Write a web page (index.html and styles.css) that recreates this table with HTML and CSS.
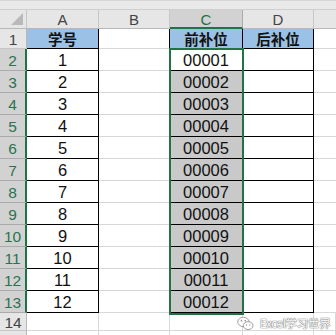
FILE: index.html
```html
<!DOCTYPE html>
<html>
<head>
<meta charset="utf-8">
<link rel="stylesheet" href="styles.css">
</head>
<body>
<div class="page">
  <div class="topbar"></div>
  <div class="sheet">
    <div class="corner"><span class="tri"></span></div>
    <div class="ch">A</div>
    <div class="ch">B</div>
    <div class="ch ch-sel">C</div>
    <div class="ch">D</div>
    <div class="ch ch-last"></div>

    <div class="rh">1</div>
    <div class="c a head">学号</div>
    <div class="c b"></div>
    <div class="c cc head">前补位</div>
    <div class="c d head">后补位</div>
    <div class="c e"></div>

    <div class="rh rh-sel">2</div><div class="c a">1</div><div class="c b"></div><div class="c cc active">00001</div><div class="c d"></div><div class="c e"></div>
    <div class="rh rh-sel">3</div><div class="c a">2</div><div class="c b"></div><div class="c cc sel">00002</div><div class="c d"></div><div class="c e"></div>
    <div class="rh rh-sel">4</div><div class="c a">3</div><div class="c b"></div><div class="c cc sel">00003</div><div class="c d"></div><div class="c e"></div>
    <div class="rh rh-sel">5</div><div class="c a">4</div><div class="c b"></div><div class="c cc sel">00004</div><div class="c d"></div><div class="c e"></div>
    <div class="rh rh-sel">6</div><div class="c a">5</div><div class="c b"></div><div class="c cc sel">00005</div><div class="c d"></div><div class="c e"></div>
    <div class="rh rh-sel">7</div><div class="c a">6</div><div class="c b"></div><div class="c cc sel">00006</div><div class="c d"></div><div class="c e"></div>
    <div class="rh rh-sel">8</div><div class="c a">7</div><div class="c b"></div><div class="c cc sel">00007</div><div class="c d"></div><div class="c e"></div>
    <div class="rh rh-sel">9</div><div class="c a">8</div><div class="c b"></div><div class="c cc sel">00008</div><div class="c d"></div><div class="c e"></div>
    <div class="rh rh-sel">10</div><div class="c a">9</div><div class="c b"></div><div class="c cc sel">00009</div><div class="c d"></div><div class="c e"></div>
    <div class="rh rh-sel">11</div><div class="c a">10</div><div class="c b"></div><div class="c cc sel">00010</div><div class="c d"></div><div class="c e"></div>
    <div class="rh rh-sel">12</div><div class="c a">11</div><div class="c b"></div><div class="c cc sel">00011</div><div class="c d"></div><div class="c e"></div>
    <div class="rh rh-sel">13</div><div class="c a">12</div><div class="c b"></div><div class="c cc sel">00012</div><div class="c d"></div><div class="c e"></div>

    <div class="rh">14</div><div class="c g"></div><div class="c g"></div><div class="c g"></div><div class="c g"></div><div class="c g"></div>
    <div class="rh"></div><div class="c g"></div><div class="c g"></div><div class="c g"></div><div class="c g"></div><div class="c g"></div>

    <div class="selbox"></div>
    <div class="mark">
      <svg class="wx" width="17" height="15" viewBox="0 0 16 14">
        <ellipse cx="6" cy="5.5" rx="5.3" ry="4.4" fill="#fff" stroke="#9a9a9a" stroke-width="0.9"/>
        <ellipse cx="10.5" cy="9" rx="4.6" ry="3.7" fill="#fff" stroke="#9a9a9a" stroke-width="0.9"/>
        <circle cx="4.2" cy="4.3" r="0.8" fill="#9a9a9a"/>
        <circle cx="7.8" cy="4.3" r="0.8" fill="#9a9a9a"/>
        <circle cx="9" cy="8.4" r="0.6" fill="#9a9a9a"/>
        <circle cx="12" cy="8.4" r="0.6" fill="#9a9a9a"/>
      </svg>
      <span class="mtext">Excel学习世界</span>
    </div>
  </div>
</div>
</body>
</html>
```
FILE: styles.css
```css
* { box-sizing: border-box; }
html, body { margin: 0; padding: 0; background: #fff; }
body { font-family: "Liberation Sans", "Noto Sans CJK SC", sans-serif; }
.page { width: 336px; height: 335px; overflow: hidden; }
.topbar {
  height: 10px;
  background: #e9e9e9;
  border-top: 1px solid #d6d6d6;
  border-bottom: 1px solid #cfcfcf;
}
.sheet {
  position: relative;
  display: grid;
  grid-template-columns: 27px 72px 71px 73px 71px 22px;
  grid-template-rows: 19px 20px repeat(12, 22px) 18px 10px;
}
.corner {
  position: relative;
  background: #e6e6e6;
  border-right: 1px solid #c6c6c6;
  border-bottom: 1px solid #b8b8b8;
}
.tri {
  position: absolute;
  right: 3px;
  bottom: 3px;
  width: 0;
  height: 0;
  border-left: 12px solid transparent;
  border-bottom: 12px solid #b9b9b9;
}
.ch {
  background: #e6e6e6;
  border-right: 1px solid #c6c6c6;
  border-bottom: 1px solid #b8b8b8;
  color: #444;
  font-size: 15px;
  display: flex;
  align-items: center;
  justify-content: center;
  padding-top: 1px;
}
.ch-sel {
  background: #d2d2d2;
  color: #217346;
  border-bottom: 2px solid #217346;
  border-right-color: #ababab;
}
.ch-last { border-right: none; }
.rh {
  background: #e6e6e6;
  border-right: 1px solid #b8b8b8;
  border-bottom: 1px solid #c6c6c6;
  color: #444;
  font-size: 15.5px;
  display: flex;
  align-items: center;
  justify-content: center;
  padding-top: 3px;
}
.rh-sel {
  background: #d2d2d2;
  color: #2b7350;
  border-right: 2px solid #217346;
  border-bottom-color: #ababab;
}
.c {
  border-right: 1px solid #d8d8d8;
  border-bottom: 1px solid #d8d8d8;
  display: flex;
  align-items: center;
  justify-content: center;
  font-size: 16.5px;
  color: #111;
  padding-top: 2px;
}
.a { border-right: 1px solid #000; border-bottom: 1px solid #000; }
.b { border-right: 1px solid #000; }
.cc { border-right: 1px solid #000; border-bottom: 1px solid #000; }
.d { border-right: 1px solid #000; border-bottom: 1px solid #000; }
.head {
  background: #9bc2e6;
  font-family: "Noto Sans CJK SC", sans-serif;
  font-weight: 700;
  font-size: 14.5px;
  padding-top: 0;
}
.sel { background: #c9c9c9; }
.active { background: #fff; }
.e { border-right: none; }
.g:last-child { border-right: none; }
.selbox {
  position: absolute;
  left: 169px;
  top: 38px;
  width: 75px;
  height: 267px;
  border: 2px solid #217346;
  pointer-events: none;
}
.mark {
  position: absolute;
  left: 237px;
  top: 305px;
  display: flex;
  align-items: center;
  gap: 6px;
  white-space: nowrap;
  line-height: 16px;
}
.mtext {
  font-family: "Noto Sans CJK SC", sans-serif;
  font-size: 11.5px;
  color: #fff;
  text-shadow: 0 0 1px #777, 0 0 1px #777, 0 0 1px #777;
  letter-spacing: -0.3px;
}
```
